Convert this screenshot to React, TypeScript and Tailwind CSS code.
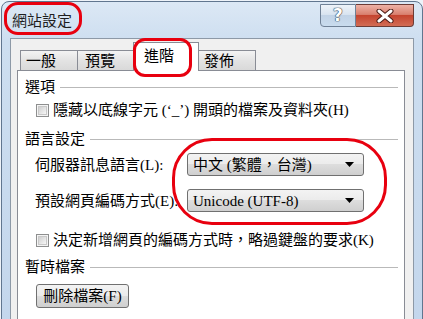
import React from "react";

const FONT = { fontFamily: '"Liberation Serif", "Noto Sans CJK TC", serif' };

function GroupHeading({ label }: { label: string }) {
  return (
    <div className="flex h-5 items-center">
      <span className="leading-5">{label}</span>
      <div className="ml-[5px] h-px flex-1 bg-[#b9b9b9]" />
    </div>
  );
}

function CheckRow({ label }: { label: string }) {
  return (
    <div className="ml-[11px] flex h-5 items-center">
      <div className="flex h-[13px] w-[13px] items-center justify-center border border-[#8e8f8f] bg-[#f4f4f4]">
        <div className="h-[9px] w-[9px] border border-[#c9c9c9] bg-[linear-gradient(135deg,#cfcfcf,#f7f7f7)]" />
      </div>
      <span className="ml-[4px] whitespace-nowrap leading-5">{label}</span>
    </div>
  );
}

function Combo({ value }: { value: string }) {
  return (
    <div className="flex h-[23px] w-[177px] items-center rounded-[3px] border border-[#707070] bg-[linear-gradient(to_bottom,#f3f3f3_0%,#ebebeb_50%,#dddddd_50%,#cfcfcf_100%)] pl-[5px] pr-[9px]">
      <span className="flex-1 whitespace-nowrap leading-5">{value}</span>
      <svg width="9" height="5" viewBox="0 0 9 5">
        <path d="M0 0 H9 L4.5 5 Z" fill="#000" />
      </svg>
    </div>
  );
}

export default function App() {
  return (
    <div className="relative h-[319px] w-[423px] overflow-hidden bg-[#eef3f9] text-[15px] text-black" style={FONT}>
      {/* window frame */}
      <div className="ml-[1px] mt-[1px] flex h-[340px] w-[422px] flex-col rounded-t-[8px] border border-[#61768f] bg-[linear-gradient(to_bottom,#dce8f5_0px,#cddef0_40px,#c3d6ec_100%)]">
        {/* title bar */}
        <div className="flex h-[36px] shrink-0 items-start">
          <span className="ml-[10px] mt-[9px] leading-5 text-[#1e1e1e]">網站設定</span>
          <div className="ml-auto mr-[8px] mt-[2px] flex h-[23px]">
            <div className="flex w-[36px] items-center justify-center rounded-bl-[4px] border border-[#6f8196] bg-[linear-gradient(to_bottom,#eef3f9_0%,#d9e4f0_45%,#c2d3e6_50%,#c9dcee_100%)]">
              <span className="text-[17px] font-bold leading-none text-white [text-shadow:0_0_1px_#2b3a4e,0_0_1px_#2b3a4e,0_0_1px_#2b3a4e]" style={{ fontFamily: '"DejaVu Sans", sans-serif' }}>
                ?
              </span>
            </div>
            <div className="flex w-[58px] items-center justify-center rounded-br-[4px] border border-l-0 border-[#6c3b35] bg-[linear-gradient(to_bottom,#eeb2a6_0%,#d9806f_45%,#c5442f_50%,#d26c55_100%)]">
              <svg width="18" height="14" viewBox="0 0 18 14">
                <path d="M3 2 L15 12 M15 2 L3 12" stroke="#4a1a14" strokeWidth="5" strokeLinecap="round" />
                <path d="M3 2 L15 12 M15 2 L3 12" stroke="#ffffff" strokeWidth="3" strokeLinecap="round" />
              </svg>
            </div>
          </div>
        </div>

        {/* client area */}
        <div className="mx-[8px] flex-1 border border-[#8d99a7] bg-[#f0f0f0]">
          {/* tabs */}
          <div className="ml-[6px] mt-[3px] flex h-[28px] items-end pl-[3px]">
            <div className="flex h-[20px] w-[58px] items-center border border-b-0 border-[#898c95] bg-[linear-gradient(to_bottom,#f3f3f3,#e3e3e3_50%,#d9d9d9)] pl-[5px] leading-5">
              一般
            </div>
            <div className="flex h-[20px] w-[57px] items-center border border-b-0 border-l-0 border-[#898c95] bg-[linear-gradient(to_bottom,#f3f3f3,#e3e3e3_50%,#d9d9d9)] pl-[7px] leading-5">
              預覽
            </div>
            <div className="relative z-10 -mb-px -ml-[2px] -mr-[2px] flex h-[29px] w-[66px] items-start border border-b-0 border-[#898c95] bg-white pl-[10px] pt-[3px] leading-5">
              進階
            </div>
            <div className="flex h-[20px] w-[59px] items-center border border-b-0 border-l-0 border-[#898c95] bg-[linear-gradient(to_bottom,#f3f3f3,#e3e3e3_50%,#d9d9d9)] pl-[7px] leading-5">
              發佈
            </div>
          </div>

          {/* panel */}
          <div className="ml-[6px] h-[260px] w-[388px] border border-[#898c95] bg-white pl-[7px] pr-[6px] pt-[6px]">
            <GroupHeading label="選項" />
            <div className="mt-[3px]">
              <CheckRow label="隱藏以底線字元 (‘_’) 開頭的檔案及資料夾(H)" />
            </div>
            <div className="mt-[9px]">
              <GroupHeading label="語言設定" />
            </div>
            <div className="ml-[10px] mt-[4px] flex items-center">
              <span className="w-[152px] whitespace-nowrap leading-5">伺服器訊息語言(L):</span>
              <Combo value="中文 (繁體，台灣)" />
            </div>
            <div className="ml-[10px] mt-[13px] flex items-center">
              <span className="w-[152px] whitespace-nowrap leading-5">預設網頁編碼方式(E):</span>
              <Combo value="Unicode (UTF-8)" />
            </div>
            <div className="mt-[18px]">
              <CheckRow label="決定新增網頁的編碼方式時，略過鍵盤的要求(K)" />
            </div>
            <div className="mt-[7px]">
              <GroupHeading label="暫時檔案" />
            </div>
            <div className="ml-[11px] mt-[7px] flex h-[24px] w-[93px] items-center justify-center rounded-[3px] border border-[#707070] bg-[linear-gradient(to_bottom,#f3f3f3_0%,#ebebeb_50%,#dddddd_50%,#cfcfcf_100%)] leading-5">
              刪除檔案(F)
            </div>
          </div>
        </div>
      </div>

      {/* red annotation marks */}
      <div className="absolute left-[4px] top-[2px] h-[33px] w-[78px] rounded-[14px] border-[3px] border-[#e8000f]" />
      <div className="absolute left-[133px] top-[38px] z-20 h-[39px] w-[59px] rounded-[12px] border-[3px] border-[#e8000f]" />
      <div className="absolute left-[172px] top-[138px] h-[87px] w-[215px] rounded-[40px] border-[3px] border-[#e8000f]" />
    </div>
  );
}
